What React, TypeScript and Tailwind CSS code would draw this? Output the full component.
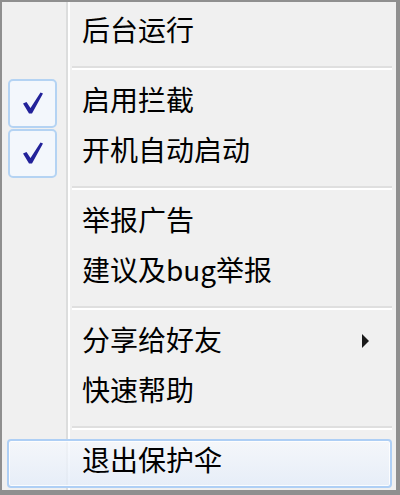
import { ReactNode } from 'react'

// Win7-style tray context menu, drawn at ~2.2x scale.

type Item = { label: string; checked?: boolean; submenu?: boolean; hot?: boolean }

const groups: Item[][] = [
  [{ label: '后台运行' }],
  [
    { label: '启用拦截', checked: true },
    { label: '开机自动启动', checked: true },
  ],
  [{ label: '举报广告' }, { label: '建议及bug举报' }],
  [{ label: '分享给好友', submenu: true }, { label: '快速帮助' }],
  [{ label: '退出保护伞', hot: true }],
]

export default function App() {
  return (
    <div
      className="w-[400px] h-[495px] border-t-2 border-l-2 border-r-4 border-b-[5px] border-[#8f8f8f] bg-[#f0f0f0] bg-[linear-gradient(to_right,transparent_64px,#dcdddd_64px,#dcdddd_66px,#ffffff_66px,#ffffff_68px,transparent_68px)] pt-[6px] pb-[2px] flex flex-col text-black"
      style={{ fontFamily: '"Noto Sans CJK SC", "Noto Sans", sans-serif' }}
    >
      {groups.map((g, gi) => (
        <div key={gi} className="flex flex-col">
          {gi > 0 && <Separator />}
          {g.map(it => (
            <Row key={it.label} item={it} />
          ))}
        </div>
      ))}
    </div>
  )
}

function Separator() {
  return (
    <div className="h-[20px] flex items-center pl-[70px] pr-[4px]">
      <div className="w-full border-t-2 border-b-2 border-t-[#dfdfdf] border-b-white" />
    </div>
  )
}

function Row({ item }: { item: Item }) {
  if (item.hot) {
    return (
      <div className="h-[50px] flex items-center">
        <div className="ml-[5px] mr-[4px] flex-1 h-[49px] flex items-center rounded-[4px] border-2 border-[#aecff5] bg-[linear-gradient(to_bottom,rgba(246,249,253,0.75),rgba(228,237,250,0.8))] shadow-[inset_0_0_0_1px_rgba(255,255,255,0.8)]">
          <span className="pl-[73px] pb-[8px] text-[28px] leading-none">{item.label}</span>
        </div>
      </div>
    )
  }
  return (
    <div className="h-[50px] flex items-center">
      <div className="w-[80px] h-full flex items-center pl-[6px]">
        {item.checked && <CheckBox />}
      </div>
      <span className="text-[28px] leading-none pb-[8px] flex-1">{item.label}</span>
      {item.submenu && (
        <div className="w-[34px] flex items-center pb-[4px]">
          <Arrow />
        </div>
      )}
    </div>
  )
}

function CheckBox(): ReactNode {
  return (
    <div className="w-[49px] h-[49px] rounded-[5px] border-2 border-[#b4d3f3] bg-[#f3f7fc] flex items-center justify-center">
      <svg width="22" height="24" viewBox="0 0 22 24">
        <path d="M1 12.5 L4.5 11 L8.5 17 L18.5 1.5 L21 2.5 L10 22.5 L7 22.5 Z" fill="#22229a" />
      </svg>
    </div>
  )
}

function Arrow() {
  return (
    <svg width="8" height="14" viewBox="0 0 8 14">
      <path d="M0 0 L7 7 L0 14 Z" fill="#1a1a1a" />
    </svg>
  )
}
